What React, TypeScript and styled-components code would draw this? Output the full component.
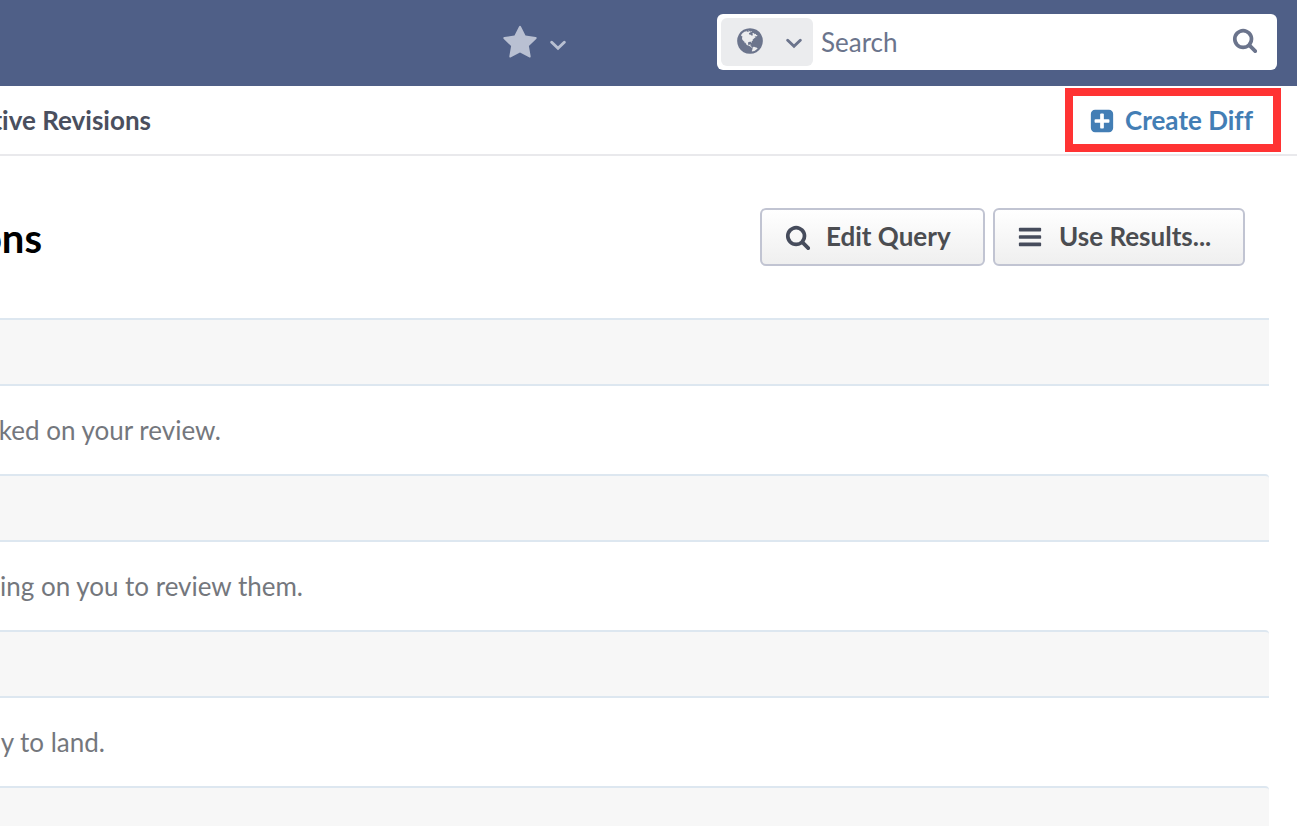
import React from "react";
import styled, { createGlobalStyle } from "styled-components";

const GlobalStyle = createGlobalStyle`
  * { box-sizing: border-box; }
  html, body { margin: 0; padding: 0; background: #fff; overflow: hidden; }
  body {
    font-family: Lato, "Liberation Sans", sans-serif;
    font-size: 26px;
    font-variant-ligatures: none;
  }
  button, input { font: inherit; font-variant-ligatures: none; margin: 0; }
`;

const Page = styled.div`
  width: 1297px;
  height: 826px;
  overflow: hidden;
  background: #fff;
`;

const TopBar = styled.header`
  display: flex;
  align-items: center;
  justify-content: flex-end;
  height: 86px;
  padding: 0 20px 2px 0;
  background: #4f5f87;
`;

const Favorites = styled.div`
  display: flex;
  align-items: center;
  gap: 12px;
  margin-right: 151px;
  padding-top: 2px;
  color: #b9c0d2;
`;

const SearchBox = styled.div`
  display: flex;
  align-items: center;
  width: 560px;
  height: 56px;
  padding: 4px;
  border-radius: 6px;
  background: #fff;
  color: #6b748c;
`;

const Scope = styled.div`
  display: flex;
  align-items: center;
  justify-content: space-between;
  width: 92px;
  height: 48px;
  padding: 0 11px 2px 14px;
  border-radius: 6px;
  background: #ebecee;
`;

const SearchLabel = styled.span`
  flex: 1;
  padding-left: 8px;
  line-height: 32px;
`;

const SearchIconSlot = styled.div`
  display: flex;
  padding: 0 15.5px 4px 0;
`;

const CrumbBar = styled.nav`
  display: flex;
  align-items: center;
  justify-content: space-between;
  height: 70px;
  padding-right: 16px;
  border-bottom: 2px solid #e9e9ec;
`;

const Clip = styled.div<{ $width: number }>`
  display: flex;
  justify-content: flex-end;
  width: ${(p) => p.$width}px;
  overflow: hidden;
  white-space: nowrap;
`;

const Crumb = styled.span`
  font-weight: 700;
  line-height: 34px;
  color: #4a4f5e;
`;

const CreateAction = styled.a`
  display: flex;
  align-items: center;
  gap: 10px;
  width: 216px;
  height: 64px;
  padding: 0 0 0 16px;
  border: 8px solid #ff3333;
  font-weight: 700;
  color: #437eb5;
  white-space: nowrap;

  svg { margin-top: 1px; }
`;

const TitleRow = styled.div`
  display: flex;
  align-items: center;
  justify-content: space-between;
  height: 162px;
  padding-right: 52px;
`;

const Title = styled.h1`
  margin: 0;
  padding-top: 1px;
  font-size: 40px;
  line-height: 48px;
  font-weight: 700;
  color: #000;
`;

const Actions = styled.div`
  display: flex;
  gap: 8px;
`;

const ActionButton = styled.button<{ $width: number; $inset: number }>`
  display: flex;
  align-items: center;
  gap: ${(p) => 38 - p.$inset}px;
  width: ${(p) => p.$width}px;
  height: 58px;
  padding: 0 0 0 ${(p) => p.$inset}px;
  border: 2px solid #c1c4d2;
  border-radius: 6px;
  background: linear-gradient(#ffffff, #efefef);
  font-weight: 700;
  color: #4b4d51;
  white-space: nowrap;

  svg { color: #464c5c; }
  span { padding-bottom: 2px; }
`;

const List = styled.main`
  width: 1269px;
`;

const GroupHeader = styled.div<{ $rounded: boolean }>`
  height: 68px;
  border-top: 2px solid #dde7f0;
  border-bottom: 2px solid #dde7f0;
  border-top-right-radius: ${(p) => (p.$rounded ? 4 : 0)}px;
  background: #f7f7f7;
`;

const GroupBody = styled.div`
  display: flex;
  align-items: center;
  height: 88px;
  line-height: 34px;
  color: #74777d;
`;

const GLYPHS = {
  search:
    "M1216 832q0-185-131.5-316.5t-316.5-131.5-316.5 131.5-131.5 316.5 131.5 316.5 316.5 131.5 316.5-131.5 131.5-316.5zm512 832q0 52-38 90t-90 38q-54 0-90-38l-343-342q-179 124-399 124-143 0-273.5-55.5t-225-150-150-225-55.5-273.5 55.5-273.5 150-225 225-150 273.5-55.5 273.5 55.5 225 150 150 225 55.5 273.5q0 220-124 399l343 343q37 37 37 90z",
  star:
    "M1728 647q0 22-26 48l-363 354 86 500q1 7 1 20 0 21-10.5 35.5t-30.5 14.5q-19 0-40-12l-449-236-449 236q-22 12-40 12-21 0-31.5-14.5t-10.5-35.5q0-6 2-20l86-500-364-354q-25-27-25-48 0-37 56-46l502-73 225-455q19-41 49-41t49 41l225 455 502 73q56 9 56 46z",
  bars:
    "M1664 1344v128q0 26-19 45t-45 19h-1408q-26 0-45-19t-19-45v-128q0-26 19-45t45-19h1408q26 0 45 19t19 45zm0-512v128q0 26-19 45t-45 19h-1408q-26 0-45-19t-19-45v-128q0-26 19-45t45-19h1408q26 0 45 19t19 45zm0-512v128q0 26-19 45t-45 19h-1408q-26 0-45-19t-19-45v-128q0-26 19-45t45-19h1408q26 0 45 19t19 45z",
  plus:
    "M1408 960v-128q0-26-19-45t-45-19h-320v-320q0-26-19-45t-45-19h-128q-26 0-45 19t-19 45v320h-320q-26 0-45 19t-19 45v128q0 26 19 45t45 19h320v320q0 26 19 45t45 19h128q26 0 45-19t19-45v-320h320q26 0 45-19t19-45zm256-544v960q0 119-84.5 203.5t-203.5 84.5h-960q-119 0-203.5-84.5t-84.5-203.5v-960q0-119 84.5-203.5t203.5-84.5h960q119 0 203.5 84.5t84.5 203.5z",
  globe:
    "M896 128q209 0 385.5 103t279.5 279.5 103 385.5-103 385.5-279.5 279.5-385.5 103-385.5-103-279.5-279.5-103-385.5 103-385.5 279.5-279.5 385.5-103zm274 521q-2 1-9.5 9.5t-13.5 9.5q2 0 4.5-5t5-11 3.5-7q6-7 22-15 14-6 52-12 34-8 51 11-2-2 9.5-13t14.5-12q3-2 15-4.5t15-7.5l2-22q-12 1-17.5-7t-6.5-21q0 2-6 8 0-7-4.5-8t-11.5 1-9 1q-10-3-15-7.5t-8-16.5-4-15q-2-5-9.5-11t-9.5-10q-1-2-2.5-5.5t-3-6.5-4-5.5-5.5-2.5-7 5-7.5 10-4.5 5q-3-2-6-1.5t-4.5 1-4.5 3-5 3.5q-3 2-8.5 3t-8.5 2q15-5-1-11-10-4-16-3 9-4 7.5-12t-8.5-14h5q-1-4-8.5-8.5t-17.5-8.5-13-6q-8-5-34-9.5t-33-.5q-5 6-4.5 10.5t4 14 3.5 12.5q1 6-5.5 13t-6.5 12q0 7 14 15.5t10 21.5q-3 8-16 16t-16 12q-5 8-1.5 18.5t10.5 16.5q2 2 1.5 4t-3.5 4.5-5.5 4-6.5 3.5l-3 2q-11 5-20.5-6t-13.5-26q-7-25-16-30-23-8-29 1-5-13-41-26-25-9-58-4 6-1 0-15-7-15-19-12 3-6 4-17.5t1-13.5q3-13 12-23 1-1 7-8.5t9.5-13.5.5-6q35 4 50-11 5-5 11.5-17t10.5-17q9-6 14-5.5t14.5 5.5 14.5 5q14 1 15.5-11t-7.5-20q12 1 3-17-4-7-8-9-12-4-27 5-8 4 2 8-1-1-9.5 10.5t-16.5 17.5-16-5q-1-1-5.5-13.5t-9.5-13.5q-8 0-16 15 3-8-11-15t-24-8q19-12-8-27-7-4-20.5-5t-19.5 4q-5 7-5.5 11.5t5 8 10.5 5.5 11.5 4 8.5 3q14 10 8 14-2 1-8.5 3.5t-11.5 4.5-6 4q-3 4 0 14t-2 14q-5-5-9-17.5t-7-16.5q7 9-25 6l-10-1q-4 0-16 2t-20.5 1-13.5-8q-4-8 0-20 1-4 4-2-4-3-11-9.5t-10-8.5q-46 15-94 41 6 1 12-1 5-2 13-6.5t10-5.5q34-14 42-7l5-5q14 16 20 25-7-4-30-1-20 6-22 12 7 12 5 18-4-3-11.5-10t-14.5-11-15-5q-16 0-22 1-146 80-235 222 7 7 12 8 4 1 5 9t2.5 11 11.5-3q9 8 3 19 1-1 44 27 19 17 21 21 3 11-10 18-1-2-9-9t-9-4q-3 5 .5 18.5t10.5 12.5q-7 0-9.5 16t-2.5 35.5-1 23.5l2 1q-3 12 5.5 34.5t21.5 19.5q-13 3 20 43 6 8 8 9 3 2 12 7.5t15 10 10 10.5q4 5 10 22.5t14 23.5q-2 6 9.5 20t10.5 23q-1 0-2.5 1t-2.5 1q3 7 15.5 14t15.5 13q1 3 2 10t3 11 8 2q2-20-24-62-15-25-17-29-3-5-5.5-15.5t-4.5-14.5q2 0 6 1.5t8.5 3.5 7.5 4 2 3q-3 7 2 17.5t12 18.5 17 19 12 13q6 6 14 19.5t0 13.5q9 0 20 10.5t17 19.5q5 8 8 26t5 24q2 7 8.5 13.5t12.5 9.5l16 8 13 7q5 2 18.5 10.5t21.5 11.5q10 4 16 4t14.5-2.5 13.5-3.5q15-2 29 15t21 21q36 19 55 11-2 1 .5 7.5t8 15.5 9 14.5 5.5 8.5q5 6 18 15t18 15q6-4 7-9-3 8 7 20t18 10q14-3 14-32-31 15-49-18 0-1-2.5-5.5t-4-8.5-2.5-8.5 0-7.5 5-3q9 0 10-3.5t-2-12.5-4-13q-1-8-11-20t-12-15q-5 9-16 8t-16-9q0 1-1.5 5.5t-1.5 6.5q-13 0-15-1 1-3 2.5-17.5t3.5-22.5q1-4 5.5-12t7.5-14.5 4-12.5-4.5-9.5-17.5-2.5q-19 1-26 20-1 3-3 10.5t-5 11.5-9 7q-7 3-24 2t-24-5q-13-8-22.5-29t-9.5-37q0-10 2.5-26.5t3-25-5.5-24.5q3-2 9-9.5t10-10.5q2-1 4.5-1.5t4.5 0 4-1.5 3-6q-1-1-4-3-3-3-4-3 7 3 28.5-1.5t27.5 1.5q15 11 22-2 0-1-2.5-9.5t-.5-13.5q5 27 29 9 3 3 15.5 5t17.5 5q3 2 7 5.5t5.5 4.5 5-.5 8.5-6.5q10 14 12 24 11 40 19 44 7 3 11 2t4.5-9.5 0-14-1.5-12.5l-1-8v-18l-1-8q-15-3-18.5-12t1.5-18.5 15-18.5q1-1 8-3.5t15.5-6.5 12.5-8q21-19 15-35 7 0 11-9-1 0-5-3t-7.5-5-4.5-2q9-5 2-16 5-3 7.5-11t7.5-10q9 12 21 2 7-8 1-16 5-7 20.5-10.5t18.5-9.5q7 2 8-2t1-12 3-12q4-5 15-9t13-5l17-11q3-4 0-4 18 2 31-11 10-11-6-20 3-6-3-9.5t-15-5.5q3-1 11.5-.5t10.5-1.5q15-10-7-16-17-5-43 12zm-163 877q206-36 351-189-3-3-12.5-4.5t-12.5-3.5q-18-7-24-8 1-7-2.5-13t-8-9-12.5-8-11-7q-2-2-7-6t-7-5.5-7.5-4.5-8.5-2-10 1l-3 1q-3 1-5.5 2.5t-5.5 3-4 3 0 2.5q-21-17-36-22-5-1-11-5.5t-10.5-7-10-1.5-11.5 7q-5 5-6 15t-2 13q-7-5 0-17.5t2-18.5q-3-6-10.5-4.5t-12 4.5-11.5 8.5-9 6.5-8.5 5.5-8.5 7.5q-3 4-6 12t-5 11q-2-4-11.5-6.5t-9.5-5.5q2 10 4 35t5 38q7 31-12 48-27 25-29 40-4 22 12 26 0 7-8 20.5t-7 21.5q0 6 2 16z",
};

const Icon = ({ name, size }: { name: keyof typeof GLYPHS; size: number }) => (
  <svg width={size} height={size} viewBox="0 0 1792 1792" fill="currentColor" aria-hidden>
    <path d={GLYPHS[name]} />
  </svg>
);

const Caret = () => (
  <svg width="16" height="11" viewBox="0 0 16 11" fill="none" stroke="currentColor" aria-hidden>
    <path d="M1.7 2.2 8 8.2l6.3-6" strokeWidth="2.9" strokeLinecap="round" />
  </svg>
);

const CaretSlot = styled.span`
  display: flex;
  padding-top: 5px;
`;

const groups = [
  { text: "ked on your review.", width: 221 },
  { text: "ing on you to review them.", width: 303 },
  { text: "y to land.", width: 105 },
  { text: "", width: 0 },
];

export default function App() {
  return (
    <Page>
      <GlobalStyle />
      <TopBar>
        <Favorites>
          <Icon name="star" size={36} />
          <CaretSlot><Caret /></CaretSlot>
        </Favorites>
        <SearchBox>
          <Scope>
            <Icon name="globe" size={30} />
            <CaretSlot><Caret /></CaretSlot>
          </Scope>
          <SearchLabel>Search</SearchLabel>
          <SearchIconSlot><Icon name="search" size={26} /></SearchIconSlot>
        </SearchBox>
      </TopBar>
      <CrumbBar>
        <Clip $width={151}><Crumb>tive Revisions</Crumb></Clip>
        <CreateAction>
          <Icon name="plus" size={26} />
          <span>Create Diff</span>
        </CreateAction>
      </CrumbBar>
      <TitleRow>
        <Clip $width={42}><Title>ons</Title></Clip>
        <Actions>
          <ActionButton $width={225} $inset={23}>
            <Icon name="search" size={26} />
            <span>Edit Query</span>
          </ActionButton>
          <ActionButton $width={252} $inset={22}>
            <Icon name="bars" size={26} />
            <span>Use Results...</span>
          </ActionButton>
        </Actions>
      </TitleRow>
      <List>
        {groups.map((g, i) => (
          <section key={i}>
            <GroupHeader $rounded={i > 0} />
            {g.text && (
              <GroupBody>
                <Clip $width={g.width}><span>{g.text}</span></Clip>
              </GroupBody>
            )}
          </section>
        ))}
      </List>
    </Page>
  );
}
